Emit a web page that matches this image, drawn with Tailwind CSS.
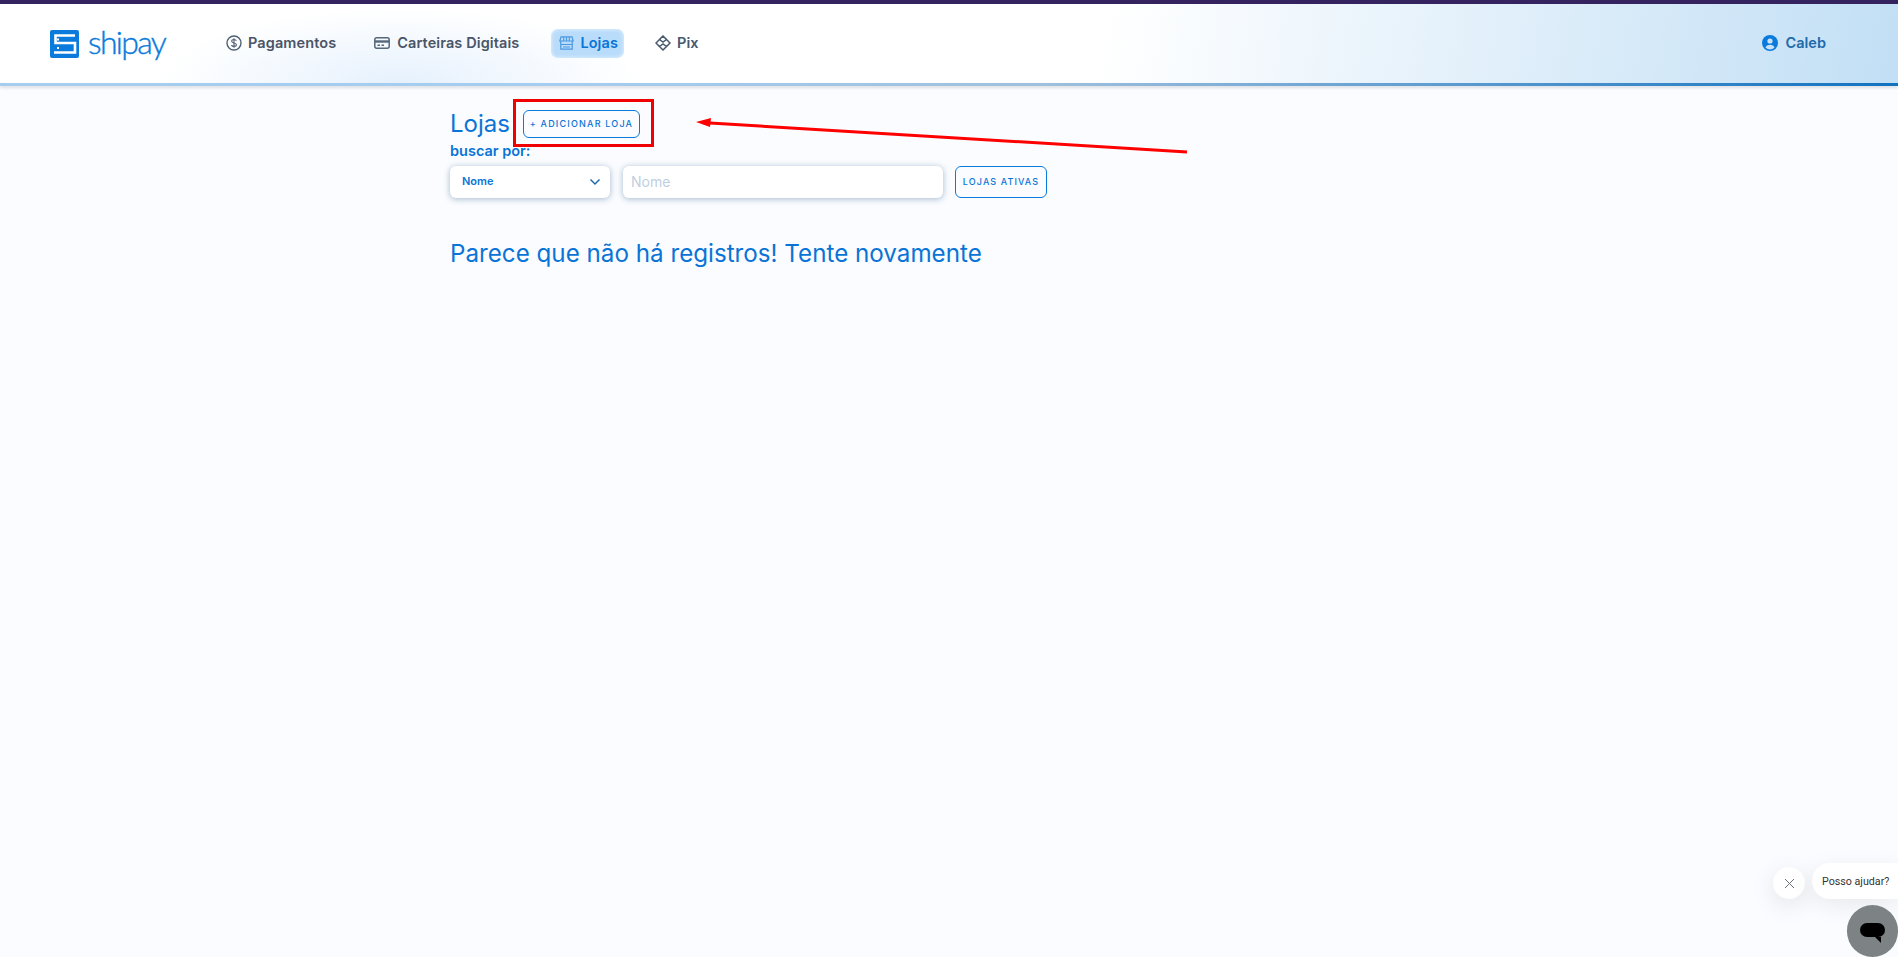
<!DOCTYPE html>
<html lang="pt-BR">
<head>
    <meta charset="UTF-8">
    <meta name="viewport" content="width=device-width, initial-scale=1.0">
    <title>Shipay - Lojas</title>
    <script src="https://cdn.jsdelivr.net/npm/@tailwindcss/browser@4"></script>
</head>
<body class="bg-[#fafcff] font-['Inter',sans-serif] overflow-hidden">
    <div class="relative h-[957px] w-[1898px]">
        <!-- topo -->
        <div class="h-1 bg-[#35235f]"></div>
        <header class="h-[79px] flex items-center justify-between pl-[50px] pr-[72px] bg-[radial-gradient(ellipse_240px_75px_at_400px_100%,#e6f1fd,transparent),linear-gradient(100deg,#ffffff_58%,#c2dff5_100%)]">
            <div class="flex items-center">
                <a class="flex items-center gap-[9px] w-[176px]">
                    <svg width="29" height="28" viewBox="0 0 29 28">
                        <rect width="29" height="28" rx="2" fill="#0a7bdc"/>
                        <path d="M25 5.500H5.500V13H25V22.500H4" fill="none" stroke="#fff" stroke-width="2.600"/>
                        <path d="M7 9.500h2M7 18h2" stroke="#fff" stroke-width="2"/>
                    </svg>
                    <span class="font-['Lato',sans-serif] font-light text-[32px] leading-none tracking-[-1.700px] text-[#0a7bdc] [-webkit-text-stroke:0.4px_#0a7bdc] -mt-1">shipay</span>
                </a>
                <nav class="flex items-center text-[14.500px] font-semibold tracking-[0.100px] text-[#4a5568]">
                    <a class="flex items-center gap-[6px] h-[29px] pb-[2px] mr-[38px]">
                        <svg width="16" height="16" viewBox="0 0 16 16" fill="none" stroke="#4f6072" stroke-width="1.400"><circle cx="8" cy="8" r="7"/><path d="M10.300 5.800C10 4.900 9 4.500 8 4.500c-1.300 0-2.300.6-2.300 1.700 0 2.300 4.700 1.200 4.700 3.600 0 1.100-1.100 1.700-2.400 1.700-1.200 0-2.200-.5-2.500-1.500M8 3.300v9.400" stroke-width="1.100"/></svg>
                        Pagamentos
                    </a>
                    <a class="flex items-center gap-[7px] h-[29px] pb-[2px] mr-[32px]">
                        <svg width="16" height="12" viewBox="0 0 16 12" fill="none" stroke="#56677a" stroke-width="1.500"><rect x=".8" y=".8" width="14.400" height="10.400" rx="2"/><path d="M1 4.500h14" stroke-width="2.400"/><path d="M3.500 8.200h2.500M7.500 8.200h2.500"/></svg>
                        Carteiras Digitais
                    </a>
                    <a class="flex items-center gap-[6px] h-[29px] pb-[2px] pl-[8px] pr-[6px] rounded-[7px] bg-[#b9dcfb] shadow-[inset_0_0_4px_rgba(255,255,255,0.7)] text-[#0a74d6] mr-[31px]">
                        <svg width="15" height="14" viewBox="0 0 15 14" fill="none" stroke="#4a98e0" stroke-width="1.200"><path d="M2 .8h11l1.200 4.200H.8zM1.800 5v8.200h11.400V5"/><path d="M4.700 1v4M7.500 1v4M10.300 1v4M1.800 8.500h11.400M4 11h7" stroke-width="1.100"/></svg>
                        Lojas
                    </a>
                    <a class="flex items-center gap-[6px] h-[29px] pb-[2px] text-[#46596e]">
                        <svg width="16" height="16" viewBox="0 0 16 16" fill="none" stroke="#46596e" stroke-width="1.500"><path d="M8 1 11.500 4.500 8 7 4.500 4.500zM4.500 4.500 1 8 4.500 11.500 8 9 11.500 11.500 15 8 11.500 4.500M4.500 11.500 8 15 11.500 11.500"/></svg>
                        Pix
                    </a>
                </nav>
            </div>
            <div class="flex items-center gap-[8px] pb-[2px] text-[14.500px] font-semibold text-[#1f6aab]">
                <svg width="16" height="16" viewBox="0 0 16 16"><circle cx="8" cy="8" r="8" fill="#0a7bdc"/><circle cx="8" cy="6" r="2.600" fill="#c9e2f6"/><path d="M3.500 12.500c.6-2 2.400-2.800 4.500-2.800s3.900.8 4.500 2.800C11.300 13.800 9.700 14.500 8 14.500s-3.300-.7-4.500-2z" fill="#c9e2f6"/></svg>
                Caleb
            </div>
        </header>
        <div class="h-[3px] bg-[linear-gradient(90deg,#a5cdf0_0%,#a5cdf0_30%,#9fc0de_55%,#1272c0_100%)] shadow-[0_2px_3px_rgba(0,0,0,0.12)]"></div>

        <!-- conteudo -->
        <main class="w-[600px] ml-[450px] pt-[24px]">
            <div class="flex items-center h-[28px]">
                <h1 class="w-[73px] text-[24px] leading-none text-[#0a74d6]">Lojas</h1>
                <button class="h-[28px] w-[117px] rounded-[6px] border border-[#0a7bdc] text-[9px] font-medium tracking-[1.200px] text-[#0a74d6]">+ ADICIONAR LOJA</button>
            </div>
            <p class="mt-[4px] text-[14.500px] leading-[17px] font-semibold text-[#0a74d6]">buscar por:</p>
            <div class="mt-[7px] flex items-center">
                <div class="flex items-center justify-between w-[160px] h-[32px] pl-[12px] pr-[9px] pb-[1px] rounded-[6px] bg-white shadow-[0_1px_6px_rgba(60,100,140,0.45)] text-[11px] font-semibold text-[#0a74d6]">
                    Nome
                    <svg width="12" height="8" viewBox="0 0 12 8" fill="none" stroke="#1f6aab" stroke-width="1.500"><path d="M1.500 1.500 6 6l4.500-4.500"/></svg>
                </div>
                <div class="flex items-center ml-[13px] w-[320px] h-[32px] pl-[8px] pb-[1px] rounded-[6px] bg-white shadow-[0_1px_6px_rgba(60,100,140,0.45)] text-[14px] text-[#c0cfdf]">Nome</div>
                <button class="ml-[12px] h-[32px] w-[92px] rounded-[6px] border border-[#0a7bdc] text-[9px] font-medium tracking-[1.100px] text-[#0a74d6]">LOJAS ATIVAS</button>
            </div>
            <h2 class="mt-[41px] text-[24.200px] leading-[30px] text-[#0a74d6]">Parece que não há registros! Tente novamente</h2>
        </main>

        <!-- marcacao sobre o print -->
        <div class="absolute left-[513px] top-[99px] w-[141px] h-[48px] border-[3px] border-[#f00000]"></div>
        <svg class="absolute left-[690px] top-[110px]" width="510" height="50" viewBox="0 0 510 50">
            <path d="M497 42 20 13" stroke="#f00" stroke-width="3" fill="none"/>
            <path d="M6 12 21 8 20 17z" fill="#f00"/>
        </svg>

        <!-- chat -->
        <div class="absolute left-[1773px] top-[867px] w-[32px] h-[32px] rounded-full bg-white shadow-[0_6px_24px_rgba(0,0,0,0.10)] flex items-center justify-center">
            <svg width="11" height="11" viewBox="0 0 11 11" stroke="#6b7280" stroke-width="1"><path d="M1 1l9 9M10 1l-9 9"/></svg>
        </div>
        <div class="absolute left-[1812px] top-[863px] w-[86px] h-[36px] rounded-l-[18px] bg-white shadow-[0_6px_24px_rgba(0,0,0,0.08)] font-['Roboto',sans-serif] text-[10.700px] leading-[37px] pl-[10px] text-[#333]">Posso ajudar?</div>
        <div class="absolute left-[1847px] top-[905px] w-[51px] h-[52px] rounded-full bg-[#7d8384]">
            <div class="absolute left-[13px] top-[18px] w-[25px] h-[14px] rounded-full bg-black"></div>
            <svg class="absolute left-[28px] top-[32px]" width="6" height="6" viewBox="0 0 6 6"><path d="M0 0h6v6z" fill="#000"/></svg>
        </div>
    </div>
</body>
</html>
